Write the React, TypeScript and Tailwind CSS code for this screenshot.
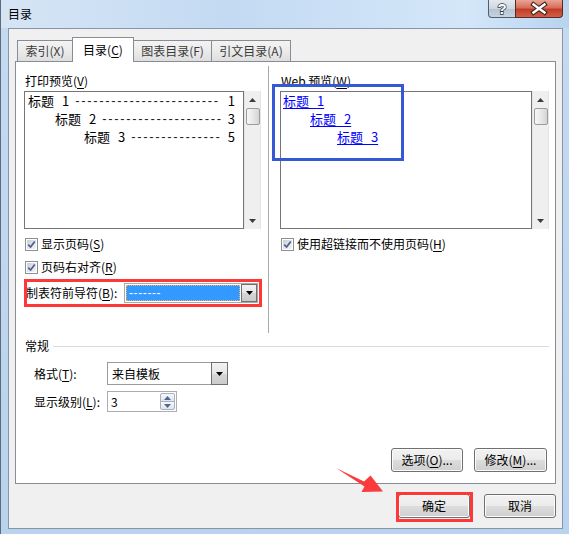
import React from "react";

function Mn({ children }: { children: React.ReactNode }) {
  return <span className="underline decoration-1 underline-offset-[2px]">{children}</span>;
}

function UpTri({ color = "#3c3c3c" }: { color?: string }) {
  return (
    <svg width="7" height="4" viewBox="0 0 7 4">
      <path d="M3.5 0L7 4H0Z" fill={color} />
    </svg>
  );
}

function DownTri({ color = "#3c3c3c" }: { color?: string }) {
  return (
    <svg width="7" height="4" viewBox="0 0 7 4">
      <path d="M0 0H7L3.5 4Z" fill={color} />
    </svg>
  );
}

function VScroll() {
  return (
    <div className="flex h-full w-[17px] flex-col border-x border-[#e4e4e4] bg-[#efefef]">
      <div className="flex h-[17px] items-center justify-center">
        <UpTri />
      </div>
      <div className="mx-auto h-[17px] w-[14px] rounded-[2px] border border-[#9c9c9c] bg-[linear-gradient(90deg,#f7f7f7,#e8e8e8_50%,#d4d4d4)]" />
      <div className="flex-1" />
      <div className="flex h-[17px] items-center justify-center">
        <DownTri />
      </div>
    </div>
  );
}

function Check({ children }: { children: React.ReactNode }) {
  return (
    <div className="flex h-[20px] items-center">
      <span className="ml-[1px] flex h-[13px] w-[13px] items-center justify-center border border-[#8e8f8f] bg-white">
        <span className="flex h-[9px] w-[9px] items-center justify-center bg-[linear-gradient(135deg,#cbcfd5,#f4f5f6)]">
          <svg width="9" height="9" viewBox="0 0 9 9">
            <path d="M1.3 4.6L3.6 7L7.8 1.4" fill="none" stroke="#4a5f97" strokeWidth="1.7" />
          </svg>
        </span>
      </span>
      <span className="ml-[3px] text-[12px] leading-[16px]">{children}</span>
    </div>
  );
}

function Btn({ children, className = "" }: { children: React.ReactNode; className?: string }) {
  return (
    <div
      className={`flex h-[24px] items-center justify-center rounded-[3px] border border-[#707070] bg-[linear-gradient(#f2f2f2,#ebebeb_50%,#dddddd_50%,#cfcfcf)] text-[12px] leading-[16px] shadow-[inset_0_0_0_1px_#fbfbfb] ${className}`}
    >
      {children}
    </div>
  );
}

// leader dots of the print preview, counted to fill up to the page number
const PRINT_LINES = [
  { indent: "pl-[3px]", num: "1", label: "1", dashes: 24 },
  { indent: "pl-[30px]", num: "3", label: "2", dashes: 20 },
  { indent: "pl-[59px]", num: "5", label: "3", dashes: 15 },
];

const WEB_LINES = ["pl-[2px]", "pl-[29px]", "pl-[56px]"];

function Sp() {
  return <span className="tracking-[5px]"> </span>;
}

function LeftCol() {
  return (
    <div className="ml-[8px] w-[237px] pt-[6px]">
      <div className="ml-[1px] h-[17px] text-[12px] leading-[17px]">
        打印预览(<Mn>V</Mn>)
      </div>
      <div className="mt-[2px] flex h-[138px]">
        <div className="w-[220px] border border-[#767676] bg-white">
          {PRINT_LINES.map((l) => (
            <div key={l.label} className={`flex h-[18px] items-center pr-[8px] text-[13px] leading-[18px] ${l.indent}`}>
              <span className="whitespace-nowrap">
                标题<Sp />{l.label}
              </span>
              <span className="ml-[6px] whitespace-nowrap font-['Liberation_Sans',sans-serif] tracking-[1.7px] text-[#222]">
                {"-".repeat(l.dashes)}
              </span>
              <span className="ml-auto">{l.num}</span>
            </div>
          ))}
        </div>
        <VScroll />
      </div>
      <div className="mt-[5px]">
        <Check>
          显示页码(<Mn>S</Mn>)
        </Check>
      </div>
      <div className="mt-[3px]">
        <Check>
          页码右对齐(<Mn>R</Mn>)
        </Check>
      </div>
      <div className="mt-[6px] flex h-[20px] items-center">
        <span className="ml-[2px] w-[98px] text-[12px] leading-[16px]">
          制表符前导符(<Mn>B</Mn>):
        </span>
        <div className="flex h-[20px] w-[134px] border border-[#a9a9a9] bg-white p-px pr-0">
          <div className="flex flex-1 items-center border border-dotted border-[#f0b060] bg-[#3399ff] pl-[2px] font-['Liberation_Sans',sans-serif] text-[12px] leading-[14px] tracking-[0.6px] text-white">
            -------
          </div>
          <div className="-my-px ml-px flex w-[16px] items-center justify-center border border-[#707070] bg-[linear-gradient(#f3f3f3,#e6e6e6_50%,#d6d6d6_50%,#cbcbcb)]">
            <DownTri color="#000" />
          </div>
        </div>
      </div>
    </div>
  );
}

function RightCol() {
  return (
    <div className="ml-[7px] border-l border-[#a8a8a8] pl-[11px] pt-[6px]">
      <div className="ml-[1px] h-[17px] text-[12px] leading-[17px]">
        Web 预览(<Mn>W</Mn>)
      </div>
      <div className="mt-[2px] flex h-[138px]">
        <div className="w-[252px] border border-[#767676] bg-white">
          {WEB_LINES.map((ind, i) => (
            <div key={ind} className={`h-[18px] text-[13px] leading-[18px] ${ind}`}>
              <span className="text-[#0000ff] underline decoration-1 underline-offset-[2px]">
                标题<Sp />{i + 1}
              </span>
            </div>
          ))}
        </div>
        <VScroll />
      </div>
      <div className="mt-[5px]">
        <Check>
          使用超链接而不使用页码(<Mn>H</Mn>)
        </Check>
      </div>
    </div>
  );
}

function Page() {
  return (
    <div className="flex h-[423px] flex-col border border-[#898c95] bg-white">
      <div className="mt-[4px] flex h-[267px]">
        <LeftCol />
        <RightCol />
      </div>

      <div className="mt-[4px] flex h-[18px] items-center pl-[9px] pr-[6px]">
        <span className="text-[12px] leading-[18px]">常规</span>
        <div className="ml-[4px] h-px flex-1 bg-[#d6dbe0]" />
      </div>

      <div className="mt-[7px] flex h-[23px] items-center pl-[18px]">
        <span className="w-[73px] text-[12px] leading-[16px]">
          格式(<Mn>T</Mn>):
        </span>
        <div className="flex h-[23px] w-[121px] border border-[#9a9a9a] bg-white">
          <div className="flex flex-1 items-center pl-[4px] text-[12px] leading-[16px]">来自模板</div>
          <div className="-my-px -mr-px flex w-[17px] items-center justify-center border border-[#707070] bg-[linear-gradient(#f3f3f3,#e6e6e6_50%,#d6d6d6_50%,#cbcbcb)]">
            <DownTri color="#000" />
          </div>
        </div>
      </div>

      <div className="mt-[6px] flex h-[21px] items-center pl-[18px]">
        <span className="w-[73px] text-[12px] leading-[16px]">
          显示级别(<Mn>L</Mn>):
        </span>
        <div className="flex h-[21px] w-[70px] border border-[#abadb3] bg-white">
          <div className="flex flex-1 items-center pl-[3px] text-[12px] leading-[16px]">3</div>
          <div className="my-px mr-px flex w-[15px] flex-col">
            <div className="flex flex-1 items-center justify-center rounded-t-[2px] border border-[#a7b0bd] bg-[linear-gradient(#f6f7f9,#e1e5ea)]">
              <UpTri color="#4d6896" />
            </div>
            <div className="-mt-px flex flex-1 items-center justify-center rounded-b-[2px] border border-[#a7b0bd] bg-[linear-gradient(#f6f7f9,#e1e5ea)]">
              <DownTri color="#4d6896" />
            </div>
          </div>
        </div>
      </div>

      <div className="mt-[36px] flex justify-end gap-[11px] pr-[8px]">
        <Btn className="w-[72px]">
          选项(<Mn>O</Mn>)...
        </Btn>
        <Btn className="w-[73px]">
          修改(<Mn>M</Mn>)...
        </Btn>
      </div>
    </div>
  );
}

const TABS = [
  { key: "x", text: "索引(X)", w: "w-[56px]" },
  { key: "c", text: "目录", w: "w-[62px]", active: true },
  { key: "f", text: "图表目录(F)", w: "w-[79px]" },
  { key: "a", text: "引文目录(A)", w: "w-[80px]" },
];

function Tabs() {
  return (
    <div className="relative z-10 -mb-px flex h-[25px] items-end pl-[2px]">
      {TABS.map((t, i) =>
        t.active ? (
          <div
            key={t.key}
            className={`-ml-px flex h-[25px] items-center justify-center border border-b-0 border-[#898c95] bg-white pb-[1px] text-[12px] leading-[16px] text-black ${t.w}`}
          >
            目录(<Mn>C</Mn>)
          </div>
        ) : (
          <div
            key={t.key}
            className={`${i === 0 ? "" : "-ml-px"} mb-px flex h-[21px] items-center justify-center border border-b-0 border-[#898c95] bg-[linear-gradient(#f3f3f3,#ebebeb_50%,#dedede)] text-[12px] leading-[16px] text-[#3a3a3a] ${t.w}`}
          >
            {t.text}
          </div>
        )
      )}
    </div>
  );
}

function TitleBar() {
  return (
    <div className="flex h-[28px] shrink-0 items-start bg-[linear-gradient(90deg,#d6e5f5,#c3daf2_40%,#d4e7f9_82%,#b8d3ef)]">
      <div className="ml-[7px] mt-[5px] text-[12px] leading-[18px] text-black">目录</div>
      <div className="ml-auto mr-[6px] flex">
        <div className="h-[18px] w-[28px] rounded-bl-[4px] border border-t-0 border-[#535e6c] bg-[linear-gradient(#e3e9f0,#cdd7e2_50%,#b4c2d2_52%,#c7d3e0)]">
          <svg width="26" height="17" viewBox="0 0 26 17">
            <text
              x="13"
              y="14"
              textAnchor="middle"
              fontSize="15"
              fontWeight="bold"
              fontFamily="Liberation Sans, sans-serif"
              fill="#ffffff"
              stroke="#2e3640"
              strokeWidth="1.4"
              paintOrder="stroke"
            >
              ?
            </text>
          </svg>
        </div>
        <div className="-ml-px h-[18px] w-[48px] rounded-br-[4px] border border-t-0 border-[#5a2a22] bg-[linear-gradient(#e9a596,#d86e5a_45%,#c23c27_55%,#d0604b)]">
          <svg width="46" height="17" viewBox="0 0 46 17">
            <path d="M17.5 4.5L28.5 12.5M28.5 4.5L17.5 12.5" stroke="#3a2520" strokeWidth="4.6" strokeLinecap="square" />
            <path d="M17.5 4.5L28.5 12.5M28.5 4.5L17.5 12.5" stroke="#ffffff" strokeWidth="2.4" strokeLinecap="square" />
          </svg>
        </div>
      </div>
    </div>
  );
}

export default function App() {
  return (
    <div className="relative flex h-[534px] w-[569px] flex-col overflow-hidden border-l border-[#5f6b78] bg-[linear-gradient(#c4daf1,#b9d3ee)] font-['Noto_Sans_CJK_SC',sans-serif] text-black">
      <TitleBar />
      <div className="ml-[7px] mr-[6px] flex h-[501px] flex-col border border-[#8795a6] bg-[#f0f0f0] px-[6px] pt-[8px]">
        <Tabs />
        <Page />
        <div className="mt-[10px] flex justify-end gap-[14px]">
          <Btn className="w-[72px]">确定</Btn>
          <Btn className="w-[72px]">取消</Btn>
        </div>
      </div>

      {/* annotations drawn over the dialog */}
      <div className="absolute left-[271px] top-[84px] h-[77px] w-[132px] border-[3px] border-[#3558d5]" />
      <div className="absolute left-[23px] top-[279px] h-[28px] w-[238px] border-[3px] border-[#fe3737]" />
      <div className="absolute left-[395px] top-[492px] h-[30px] w-[77px] border-[3px] border-[#fe3737]" />
      <svg className="absolute left-[330px] top-[460px]" width="60" height="40" viewBox="0 0 60 40">
        <path d="M5 8L33 21.5L39.5 15.5L52 31.5L30.5 32L33.5 26.5Z" fill="#fb3b3b" />
      </svg>
    </div>
  );
}
